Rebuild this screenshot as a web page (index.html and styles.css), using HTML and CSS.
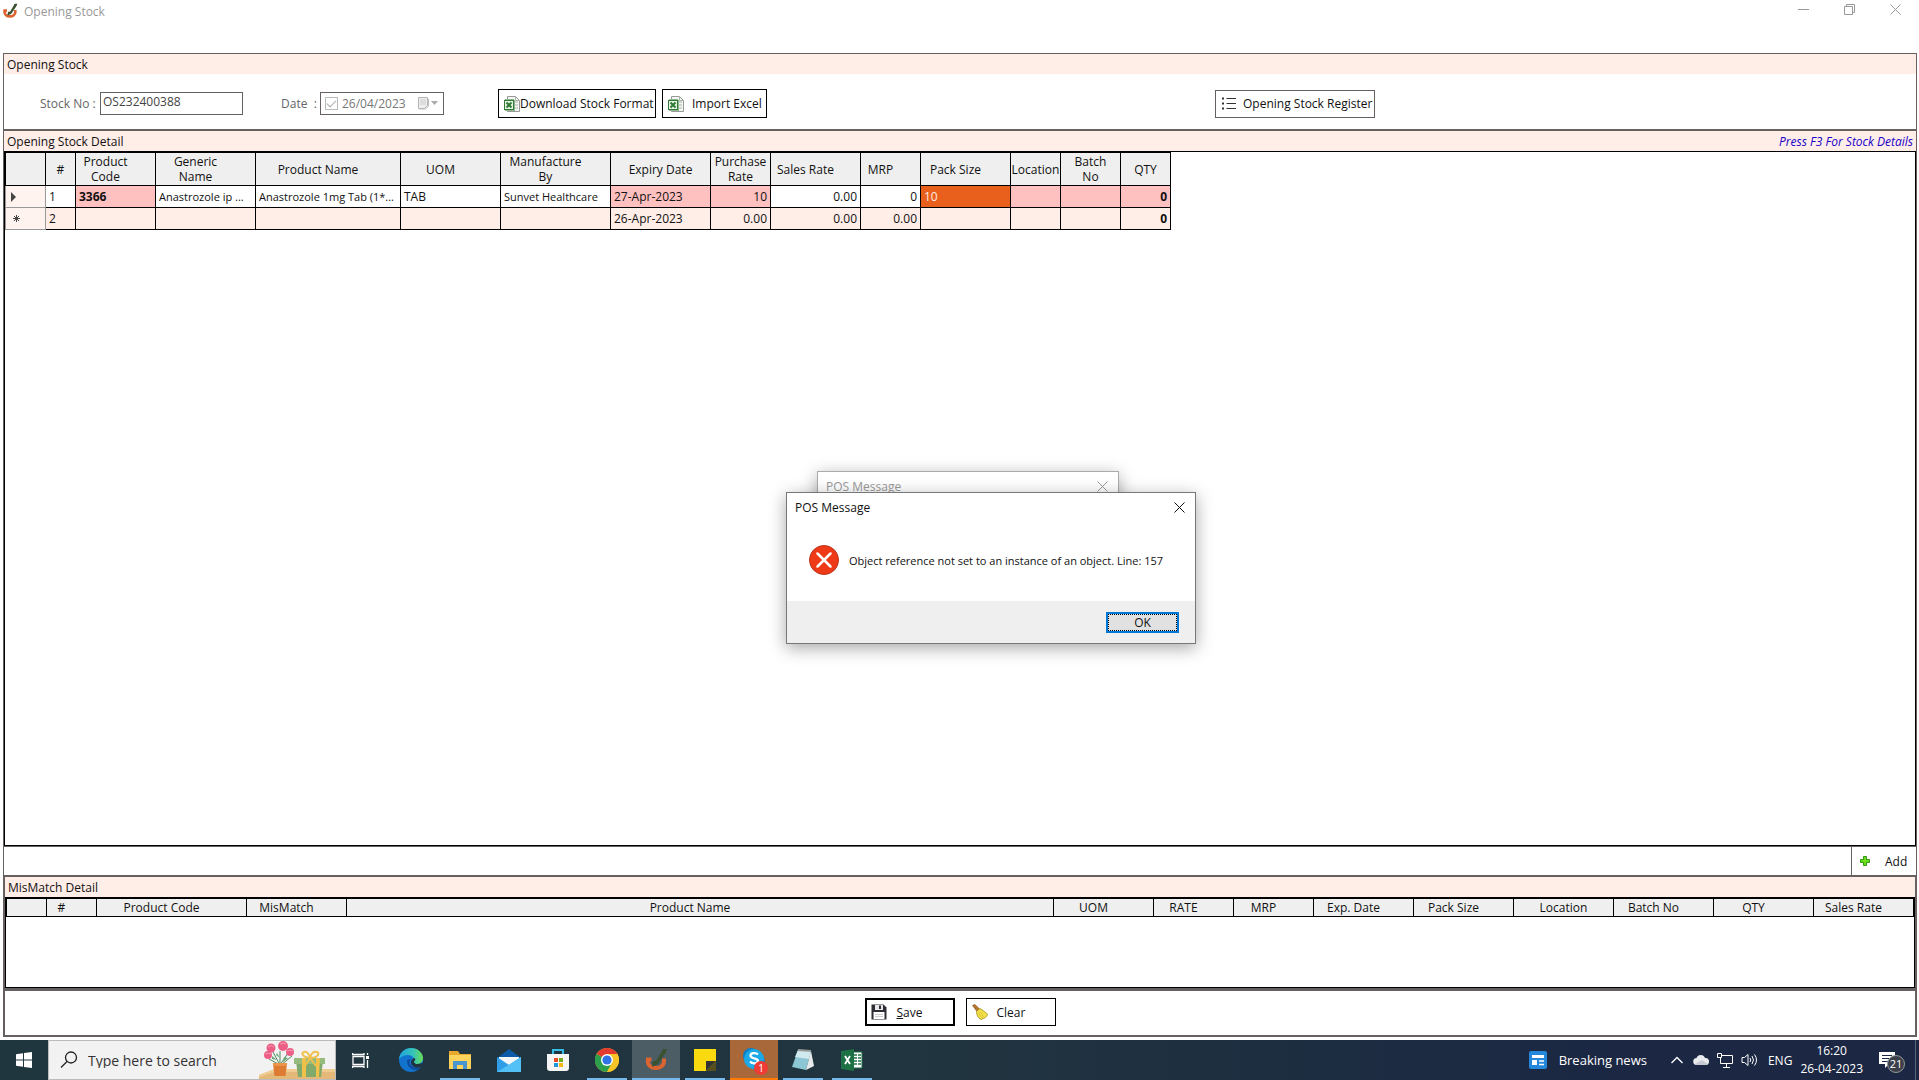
FILE: index.html
```html
<!DOCTYPE html>
<html lang="en">
<head>
    <meta charset="UTF-8">
    <meta name="viewport" content="width=device-width, initial-scale=1.0">
    <title>Opening Stock</title>
    <link rel="stylesheet" href="styles.css">
</head>
<body>

    <!-- shared icons -->
    <svg class="defs" width="0" height="0">
        <symbol id="logo" viewBox="0 0 24 24">
            <path d="M2 11.500h5.500M3.800 11.500v1.500c0 4.500 3.500 7 8 7s8.200-2.500 8.200-7v-2.500" fill="none" stroke="#dc6430" stroke-width="4"/>
            <path d="M18 3l1-2h4l-1 3-8 12-6 3 1-6h3z" fill="#3a5230"/>
        </symbol>
        <symbol id="excel" viewBox="0 0 16 16">
            <path d="M3.500.5h8l4 4v11h-12z" fill="#f4f6f4" stroke="#999"/>
            <path d="M11.500.5v4h4M9 6h5M9 9h5M9 12h5" fill="none" stroke="#aab5aa"/>
            <path d="M1 3h9v1h1v11H1z" fill="#8fb78f"/>
            <rect x=".5" y="4.500" width="9" height="9" fill="#e9f3e6" stroke="#2f7a34"/>
            <path d="M2.500 6.500l5 5M7.500 6.500l-5 5" stroke="#2f7a34" stroke-width="2"/>
        </symbol>
        <symbol id="close" viewBox="0 0 11 11">
            <path d="M.5.5l10 10M10.500.5l-10 10" fill="none" stroke="currentColor"/>
        </symbol>
    </svg>

    <header class="titlebar">
        <svg class="logo"><use href="#logo"/></svg>
        <h1>Opening Stock</h1>
        <div class="window-buttons">
            <button aria-label="Minimize"><svg width="11" height="11"><path d="M0 5.500h11" stroke="currentColor"/></svg></button>
            <button aria-label="Restore"><svg width="11" height="11" fill="none" stroke="currentColor"><path d="M.5 2.500h8v8h-8zM2.500 2.500v-2h8v8h-2"/></svg></button>
            <button aria-label="Close"><svg width="11" height="11"><use href="#close"/></svg></button>
        </div>
    </header>

    <main class="form">
        <section class="stock">
            <h2>Opening Stock</h2>
            <div class="fields">
                <label class="stock-label" for="stockNo">Stock No :</label>
                <input class="stock-no" id="stockNo" type="text" value="OS232400388" readonly>
                <label class="date-label" for="stockDate">Date &nbsp;:</label>
                <div class="date-box">
                    <input type="checkbox" id="useDate" aria-label="Use date" checked disabled>
                    <input type="text" id="stockDate" value="26/04/2023" disabled>
                    <button aria-label="Open calendar" disabled>
                        <svg width="20" height="13"><path d="M.5.5h9v8l-3 3h-6z" fill="#eee" stroke="#b5b5b5"/><path d="M2 3h6M2 5h6M2 7h6" stroke="#ccc"/><path d="M10.500 2v7l-3 3h-6" fill="none" stroke="#bbb"/><path d="M13 4h7l-3.500 4z" fill="#aaa"/></svg>
                    </button>
                </div>
                <button class="btn download"><svg class="icon"><use href="#excel"/></svg>Download Stock Format</button>
                <button class="btn import"><svg class="icon"><use href="#excel"/></svg>Import Excel</button>
                <button class="btn register">
                    <svg class="icon" viewBox="0 0 16 16"><path d="M5.500 2.500H15M5.500 7.500H15M5.500 12.500H15" stroke="#333"/><path d="M1 1.500h2v2H1zM1 6.500h2v2H1zM1 11.500h2v2H1z" fill="#333"/></svg>
                    Opening Stock Register
                </button>
            </div>
        </section>

        <section class="detail">
            <div class="section-head">
                <h2>Opening Stock Detail</h2>
                <em>Press F3 For Stock Details</em>
            </div>
            <div class="grid-box">
                <table class="grid stock-grid">
                    <colgroup>
                        <col class="w40"><col class="w30"><col class="w80"><col class="w100"><col class="w145">
                        <col class="w100"><col class="w110"><col class="w100"><col class="w60"><col class="w90">
                        <col class="w60"><col class="w90"><col class="w50"><col class="w60"><col class="w50">
                    </colgroup>
                    <thead>
                        <tr>
                            <th></th>
                            <th>#</th>
                            <th class="sort">Product<br>Code</th>
                            <th class="sort">Generic<br>Name</th>
                            <th class="sort">Product Name</th>
                            <th class="sort">UOM</th>
                            <th class="sort">Manufacture<br>By</th>
                            <th>Expiry Date</th>
                            <th>Purchase<br>Rate</th>
                            <th class="sort">Sales Rate</th>
                            <th class="sort">MRP</th>
                            <th class="sort">Pack Size</th>
                            <th>Location</th>
                            <th>Batch<br>No</th>
                            <th>QTY</th>
                        </tr>
                    </thead>
                    <tbody>
                        <tr>
                            <td class="row-head"><svg width="5" height="10"><path d="M0 0l5 5-5 5z" fill="#444"/></svg></td>
                            <td>1</td>
                            <td class="must bold">3366</td>
                            <td class="name">Anastrozole ip ...</td>
                            <td class="name">Anastrozole 1mg Tab (1*...</td>
                            <td>TAB</td>
                            <td class="name">Sunvet Healthcare</td>
                            <td class="must">27-Apr-2023</td>
                            <td class="must num">10</td>
                            <td class="num">0.00</td>
                            <td class="num">0</td>
                            <td class="selected">10</td>
                            <td class="must"></td>
                            <td class="must"></td>
                            <td class="must num bold">0</td>
                        </tr>
                        <tr class="new-row">
                            <td class="row-head"><svg class="star" width="7" height="7"><path d="M3.500 0v7M0 3.500h7M1 1l5 5M6 1L1 6" stroke="#444"/></svg></td>
                            <td>2</td>
                            <td></td>
                            <td></td>
                            <td></td>
                            <td></td>
                            <td></td>
                            <td>26-Apr-2023</td>
                            <td class="num">0.00</td>
                            <td class="num">0.00</td>
                            <td class="num">0.00</td>
                            <td></td>
                            <td></td>
                            <td></td>
                            <td class="num bold">0</td>
                        </tr>
                    </tbody>
                </table>
            </div>
            <div class="add-row">
                <button class="add">
                    <svg width="10" height="10"><path d="M3.500.5h3v3h3v3h-3v3h-3v-3h-3v-3h3z" fill="#6fdc1e" stroke="#2f9a10"/></svg>
                    Add
                </button>
            </div>
        </section>

        <section class="mismatch">
            <h2>MisMatch Detail</h2>
            <div class="mismatch-box">
                <table class="grid mismatch-grid">
                    <colgroup>
                        <col class="w40"><col class="w50"><col class="w150"><col class="w100"><col>
                        <col class="w100"><col class="w80"><col class="w80"><col class="w100"><col class="w100">
                        <col class="w100"><col class="w100"><col class="w100"><col class="w100">
                    </colgroup>
                    <thead>
                        <tr>
                            <th></th>
                            <th class="sort">#</th>
                            <th class="sort">Product Code</th>
                            <th class="sort">MisMatch</th>
                            <th class="sort">Product Name</th>
                            <th class="sort">UOM</th>
                            <th class="sort">RATE</th>
                            <th class="sort">MRP</th>
                            <th class="sort">Exp. Date</th>
                            <th class="sort">Pack Size</th>
                            <th>Location</th>
                            <th class="sort">Batch No</th>
                            <th class="sort">QTY</th>
                            <th class="sort">Sales Rate</th>
                        </tr>
                    </thead>
                </table>
            </div>
        </section>

        <div class="actions">
            <button class="btn action save">
                <svg class="icon" viewBox="0 0 16 16"><path d="M.5.5h12l3 3v12H.5z" fill="#2d2d35"/><path d="M4 1h8v5H4z" fill="#e8e8e8"/><path d="M8 1.500h2v3.500H8z" fill="#2d2d35"/><path d="M2.500 8h11v7h-11z" fill="#fff"/><path d="M4 10.500h8M4 12.500h8" stroke="#ccc"/></svg>
                <span><u>S</u>ave</span>
            </button>
            <button class="btn action">
                <svg class="icon" viewBox="0 0 16 16"><path d="M.5 1.500l2.500-1 5 5-2.500 2.500z" fill="#b8742a" stroke="#7b4a15" stroke-width=".6"/><path d="M8 4.500l3 2 4.500 3.500c0 1.500-1.500 3.500-3 4L9 15.500C6 14 4.500 11 4.500 7.500z" fill="#f2e04a" stroke="#a8901c" stroke-width=".8"/><path d="M8 8l4 5M6.500 9l3.500 5" stroke="#c9b02a" stroke-width=".6"/></svg>
                Clear
            </button>
        </div>
    </main>

    <div class="dialog dialog-back">
        <div class="dialog-title">POS Message <button aria-label="Close message"><svg width="11" height="11"><use href="#close"/></svg></button></div>
    </div>
    <div class="dialog dialog-front" role="alertdialog" aria-labelledby="msgTitle">
        <div class="dialog-title"><span id="msgTitle">POS Message</span> <button aria-label="Close dialog"><svg width="11" height="11"><use href="#close"/></svg></button></div>
        <div class="dialog-body">
            <svg width="30" height="30"><circle cx="15" cy="15" r="14.500" fill="#ee3a16" stroke="#b83418"/><path d="M8.500 8.500l13 13M21.500 8.500l-13 13" stroke="#fff" stroke-width="2.500" stroke-linecap="round"/></svg>
            <p>Object reference not set to an instance of an object. Line: 157</p>
        </div>
        <div class="dialog-foot"><button class="ok">OK</button></div>
    </div>

    <footer class="taskbar">
        <button class="task" aria-label="Start"><svg width="16" height="16" fill="#fff"><path d="M0 2.200L7 1.300V7.600H0zM8 1.100L16 0v7.600H8zM0 8.400h7v6.300l-7-1zM8 8.400h8V16l-8-1.100z"/></svg></button>
        <div class="search">
            <svg width="18" height="18" fill="none" stroke="#222" stroke-width="1.300"><circle cx="11" cy="6.500" r="5.500"/><path d="M7 10.500L1 16.500"/></svg>
            <input type="text" aria-label="Search" placeholder="Type here to search">
            <svg class="gift" width="76" height="38" viewBox="0 0 76 38">
                <path d="M0 38v-4l16-6h60v10z" fill="#e3b878"/>
                <path d="M0 36v-2l16-6h60v3H16z" fill="#f0cb8f"/>
                <path d="M21 24l-7-13M21 24l-11-6M21 24V10M21 24l8-12M22 24l11-9" stroke="#4e8a5c" fill="none"/>
                <path d="M13 15l5 4-5-1zM29 17l-5 4 1-5zM18 12l3 5-4-3z" fill="#6aa678"/>
                <g fill="#ec5e86"><circle cx="12" cy="7" r="4.500"/><circle cx="24" cy="5" r="5"/><circle cx="9" cy="14" r="4"/><circle cx="31" cy="11" r="4"/></g>
                <g fill="none" stroke="#f79ab0"><path d="M9 6q3-3 6 0M21 3q3-2 6 0M6 13q3-2 6 0M28 10q3-2 6 0"/></g>
                <path d="M14 22h14l-1.500 13h-11z" fill="#dd7b33"/><path d="M14 22h14v3H14z" fill="#ed9249"/>
                <path d="M37 20h27l-2 16H39z" fill="#7faa6c"/><path d="M35 17h31v6H35z" fill="#95bb7e"/>
                <path d="M43 17h4v19h-4zM57 17h4l-1 19h-3z" fill="#efc04a"/>
                <path d="M51 17c-8-1-9-5-6-6s5 2 6 6c1-5 4-7 7-6s1 6-7 6l6 8M51 17l-5 8" fill="none" stroke="#efc04a" stroke-width="2"/>
            </svg>
        </div>
        <button class="task" aria-label="Task view"><svg width="17" height="17" fill="none" stroke="#fff" stroke-width="1.300"><path d="M1 4.500h11v8H1zM.5 1v1.500h11.500V1M.5 16v-1.500h11.500V16M15.500 1v2M15.500 8v8"/><path d="M14 4h3v3h-3z" fill="#fff" stroke="none"/></svg></button>
        <nav class="apps">
            <button class="task" aria-label="Edge"><svg width="24" height="24">
                <defs>
                    <linearGradient id="edgeTop" x1="0" y1="0" x2="1" y2="0"><stop offset="0" stop-color="#1fa5e0"/><stop offset=".6" stop-color="#35c4b8"/><stop offset="1" stop-color="#6bdc55"/></linearGradient>
                </defs>
                <circle cx="12" cy="12" r="12" fill="#1273cf"/>
                <path d="M0 11C1 4 6 0 12 0c7 0 12 5 12 10 0 4-3 6-6 6-2 0-4-1-3-3 1-3-2-6-6-6-4 0-7 2-9 4z" fill="url(#edgeTop)"/>
                <path d="M8 13c0 6 5 9 9 9 2 0 4-1 5-3-2 1-9 2-11-3-1-2 0-4 1-5-2 0-4 1-4 2z" fill="#0d4c9b"/>
                <path d="M15 10c3 1 0 3 0 4 0 2 4 3 8 1l1 1-2 3c-2 1-5 1-7 0-4-2-4-7 0-9z" fill="#20343f"/>
            </svg></button>
            <button class="task running" aria-label="File Explorer"><svg width="22" height="18"><path d="M0 0h9l2 3h11v15H0z" fill="#e8a92f"/><path d="M0 4h22v14H0z" fill="#fcd35d"/><path d="M4 10h14v8h-4v-4H8v4H4z" fill="#4a96cf"/></svg></button>
            <button class="task" aria-label="Mail"><svg width="24" height="23"><path d="M0 9L12 0l12 9v4H0z" fill="#0c5ba8"/><path d="M2 8h20v8H2z" fill="#f5f8fb"/><path d="M0 8l12 8L24 8v15H0z" fill="#2f9ee6"/><path d="M0 23L24 8v15z" fill="#53c1f5"/></svg></button>
            <button class="task" aria-label="Store"><svg width="22" height="24"><path d="M6 6V2h10v4" fill="none" stroke="#36bde5" stroke-width="2"/><path d="M0 6h22v14q0 3-3 3H3q-3 0-3-3z" fill="#f5f5f5"/><path d="M7 10h4v4H7z" fill="#e74a28"/><path d="M12 10h4v4h-4z" fill="#72ad1f"/><path d="M7 15h4v4H7z" fill="#2197db"/><path d="M12 15h4v4h-4z" fill="#f6b516"/></svg></button>
            <button class="task running" aria-label="Chrome"><svg width="24" height="24"><circle cx="12" cy="12" r="12" fill="#f9c526"/><path d="M12 12L1.600 6A12 12 0 0 1 22.400 6z" fill="#e33b2e"/><path d="M12 12L1.600 6A12 12 0 0 0 12 24l5.200-9z" fill="#2b9f4b"/><path d="M12 6h10.400A12 12 0 0 1 12 24l5-9z" fill="#f9c526"/><circle cx="12" cy="12" r="6" fill="#fff"/><circle cx="12" cy="12" r="4.600" fill="#2f73e4"/></svg></button>
            <button class="task running active" aria-label="Opening Stock"><svg width="24" height="24"><use href="#logo"/></svg></button>
            <button class="task running" aria-label="Sticky Notes"><svg width="22" height="22"><path d="M0 0h22v12L12 22H0z" fill="#fbd90f"/><path d="M12 22V12h10z" fill="#333"/><path d="M22 12v10H12z" fill="#57501e"/></svg></button>
            <button class="task alert" aria-label="Skype">
                <svg width="24" height="24"><circle cx="9" cy="9" r="8" fill="#0a7fc9"/><circle cx="15" cy="15" r="8" fill="#0a7fc9"/><circle cx="12" cy="12" r="10" fill="#1ba9e8"/><path d="M16 7.500c-2-2-7.500-2-7.500 1.200 0 3.300 7.500 2 7.500 5.300 0 3-6 3-8 .5" fill="none" stroke="#fff" stroke-width="2.300"/></svg>
                <span class="badge">1</span>
            </button>
            <button class="task running" aria-label="Notepad"><svg width="24" height="22"><path d="M7 1l13 1-5 19-14-3z" fill="#8cc5d3"/><path d="M7 1l13 1-2 8L4 8z" fill="#cfe9ef"/><path d="M20 2l3 15-8 4z" fill="#e7eaea"/><path d="M7 1l13 1" stroke="#999" stroke-width="2"/></svg></button>
            <button class="task running" aria-label="Excel"><svg width="22" height="22"><path d="M11 3h10v16H11z" fill="#fff" stroke="#1e7145"/><path d="M13 6h3M13 9h3M13 12h3M13 15h3M17 6h3M17 9h3M17 12h3M17 15h3" stroke="#1e7145" stroke-width="1.500"/><path d="M0 2l13-2v22L0 20z" fill="#1e7145"/><path d="M4 7l5 8M9 7l-5 8" stroke="#fff" stroke-width="1.800"/></svg></button>
        </nav>
        <div class="tray">
            <button class="news"><svg width="18" height="18"><rect width="18" height="18" rx="2" fill="#2487dc"/><path d="M3 4h12v3H3z" fill="#fff"/><path d="M3 9h5v5H3z" fill="#fff"/><path d="M10 10h5M10 13.500h5" stroke="#fff" stroke-width="1.500"/></svg>Breaking news</button>
            <svg width="12" height="16" fill="none" stroke="#fff" stroke-width="1.300"><path d="M.5 11L6 5.500l5.500 5.500"/></svg>
            <svg class="cloud" width="16" height="16"><path d="M4 13a3.500 3.500 0 0 1-.5-7A4.500 4.500 0 0 1 12 6a3.500 3.500 0 0 1 1 7z" fill="#e9ebee"/><path d="M2 12l7-4 6 4q-1 1-2 1H4q-1.500 0-2-1z" fill="#c6cbd1"/></svg>
            <svg width="16" height="16" fill="none" stroke="#fff"><path d="M5 3.500h10.500v8H3.500V6M9.500 12v3M6 15.500h7M.5 1.500h4v4h-4z"/></svg>
            <svg width="17" height="16" fill="none" stroke="#fff"><path d="M1 5.500h2.500L7 2.500v11l-3.500-3H1zM9 6q1.500 2 0 4M11 4q3 4 0 8M13.500 2.500q4 5.500 0 11"/></svg>
            <span class="lang">ENG</span>
            <time>16:20<br>26-04-2023</time>
            <button class="notify" aria-label="Notifications">
                <svg width="16" height="18"><path d="M0 1h16v12h-6l-4 4v-4H0z" fill="#fff"/><path d="M3 4.500h10M3 7.500h10M3 10.500h6" stroke="#1b2743"/></svg>
                <span class="count">21</span>
            </button>
        </div>
    </footer>

</body>
</html>
```

FILE: styles.css
```css
* {
    margin: 0;
    padding: 0;
    box-sizing: border-box;
}
body {
    display: flex;
    flex-direction: column;
    min-height: 100vh;
    font-family: "Open Sans", "Noto Sans", sans-serif;
    font-size: 12px;
    line-height: 15px;
    color: #111;
    background-color: #fff;
}
button, input {
    font: inherit;
    color: inherit;
    border: none;
    background: none;
}
svg {
    display: block;
    flex: none;
}
.defs {
    position: absolute;
}
h1, h2 {
    font-size: 12px;
    font-weight: normal;
}

/* title bar */
.titlebar {
    display: flex;
    align-items: flex-start;
    height: 53px;
    padding: 3px 1px 0 2px;
    color: #999;
}
.titlebar h1 {
    margin: 1px 0 0 6px;
}
.logo {
    width: 16px;
    height: 16px;
}
.window-buttons {
    display: flex;
    margin-left: auto;
}
.window-buttons button {
    display: flex;
    justify-content: center;
    width: 46px;
    padding-top: 1px;
}

/* form panels */
.form {
    flex: 1;
    display: flex;
    flex-direction: column;
    margin: 0 2px 3px 3px;
    border: 1px solid #666060;
}
h2, .section-head {
    height: 20px;
    padding: 3px 3px 2px;
    background-color: #ffede8;
}
.section-head {
    display: flex;
    justify-content: space-between;
}
.section-head h2 {
    padding: 0;
    height: 15px;
}
.section-head em {
    color: #1a00c8;
}
.stock {
    border-bottom: 2px solid #666060;
}
.fields {
    display: flex;
    align-items: center;
    height: 55px;
    padding-left: 36px;
    padding-top: 4px;
    color: #666;
}
.stock-label {
    width: 60px;
}
.stock-no {
    width: 143px;
    height: 23px;
    padding: 0 2px 4px;
    border: 1px solid #666060;
    color: #444;
}
.date-label {
    width: 39px;
    margin-left: 38px;
}
.date-box {
    display: flex;
    align-items: center;
    width: 124px;
    height: 23px;
    padding: 0 5px 0 4px;
    border: 1px solid #666060;
    color: #777;
}
.date-box input[type="checkbox"] {
    appearance: none;
    flex: none;
    width: 13px;
    height: 13px;
    margin-right: 4px;
    border: 1px solid #bbb;
}
.date-box input[type="checkbox"]:checked::after {
    content: "";
    display: block;
    width: 8px;
    height: 4px;
    margin: 2px 0 0 1px;
    border: solid #aaa;
    border-width: 0 0 1px 1px;
    transform: rotate(-45deg);
}
.date-box input[type="text"] {
    flex: 1;
    min-width: 0;
}
.btn {
    display: flex;
    align-items: center;
    height: 29px;
    padding: 0 5px;
    border: 1px solid #000;
    background-color: #fff;
    color: #111;
    white-space: nowrap;
}
.icon {
    width: 16px;
    height: 16px;
}
.download {
    width: 158px;
    margin-left: 54px;
}
.import {
    width: 105px;
    margin-left: 6px;
    gap: 8px;
}
.register {
    width: 160px;
    height: 28px;
    margin-left: 448px;
    gap: 6px;
    border-color: #666060;
}

/* grids */
.detail {
    flex: 1;
    display: flex;
    flex-direction: column;
}
.grid-box {
    flex: 1;
    border: 1px solid #000;
}
.grid {
    border-collapse: collapse;
    table-layout: fixed;
}
.stock-grid {
    width: 1166px;
}
.mismatch-grid {
    width: 100%;
}
.w30 { width: 30px; }
.w40 { width: 40px; }
.w50 { width: 50px; }
.w60 { width: 60px; }
.w80 { width: 80px; }
.w90 { width: 90px; }
.w100 { width: 100px; }
.w110 { width: 110px; }
.w145 { width: 145px; }
.w150 { width: 150px; }
.grid th, .grid td {
    border: 1px solid #000;
    white-space: nowrap;
}
.grid th {
    height: 33px;
    font-weight: normal;
    background-color: #efefef;
}
.grid th.sort {
    padding-right: 20px;
}
.mismatch-grid th {
    height: 18px;
}
.grid td {
    height: 22px;
    padding: 0 3px;
    overflow: hidden;
}
.grid td.name {
    font-size: 11px;
}
.grid td.num {
    text-align: right;
}
.grid td.bold {
    font-weight: bold;
}
.grid td.must {
    background-color: #ffc0c0;
}
.grid td.selected {
    background-color: #e9601c;
    color: #ffede8;
}
.new-row td {
    background-color: #ffede8;
}
.grid td.row-head {
    padding-left: 5px;
    border-color: #999;
    background-color: #fff3f0;
}
.star {
    margin-left: 2px;
}
.add-row {
    display: flex;
    justify-content: flex-end;
    height: 31px;
    border: solid #666060;
    border-width: 1px 0 2px;
}
.add {
    display: flex;
    align-items: center;
    gap: 15px;
    width: 65px;
    padding-left: 8px;
    border-left: 1px solid #666060;
}
.mismatch {
    border: solid #666060;
    border-width: 0 1px 3px;
}
.mismatch-box {
    height: 91px;
    border: 1px solid #000;
}
.actions {
    display: flex;
    justify-content: center;
    align-items: center;
    gap: 11px;
    height: 45px;
    padding-bottom: 2px;
    border: solid #666060;
    border-width: 0 1px 1px;
}
.action {
    width: 90px;
    height: 28px;
    gap: 9px;
}
.save {
    border-width: 2px;
    padding: 0 4px;
    gap: 10px;
}

/* message boxes */
.dialog {
    position: absolute;
    border: 1px solid #777;
    background-color: #fff;
    box-shadow: 0 4px 16px rgba(0, 0, 0, 0.35);
}
.dialog-back {
    left: 817px;
    top: 471px;
    width: 302px;
    height: 100px;
    color: #999;
    border-color: #aaa;
}
.dialog-front {
    left: 786px;
    top: 492px;
    width: 410px;
}
.dialog-title {
    display: flex;
    justify-content: space-between;
    align-items: center;
    height: 28px;
    padding: 0 10px 0 8px;
}
.dialog-body {
    display: flex;
    align-items: center;
    gap: 10px;
    height: 80px;
    padding-left: 22px;
    padding-bottom: 2px;
    font-size: 11px;
}
.dialog-foot {
    display: flex;
    justify-content: flex-end;
    align-items: center;
    height: 42px;
    padding-right: 16px;
    background-color: #efefef;
}
.ok {
    width: 73px;
    height: 21px;
    border: 2px solid #0078d7;
    outline: 1px dotted #000;
    outline-offset: -3px;
    background-color: #e1e1e1;
}

/* taskbar */
.taskbar {
    display: flex;
    height: 40px;
    color: #fff;
    background: linear-gradient(90deg, #20363f, #20343f 50%, #1b2743 85%);
}
.task {
    position: relative;
    display: flex;
    justify-content: center;
    align-items: center;
    width: 48px;
    height: 40px;
}
.search {
    display: flex;
    align-items: center;
    width: 288px;
    padding-left: 11px;
    border: 1px solid #bbb;
    background-color: #f2f2f2;
}
.search input {
    flex: 1;
    min-width: 0;
    margin-left: 10px;
    font-size: 14px;
}
.search input::placeholder {
    color: #333;
    opacity: 1;
}
.apps {
    display: flex;
    gap: 1px;
    margin-left: 3px;
}
.running::after {
    content: "";
    position: absolute;
    left: 4px;
    right: 4px;
    bottom: 0;
    height: 2px;
    background-color: #76b9ed;
}
.active {
    background-color: #4d5d66;
}
.active::after {
    left: 0;
    right: 0;
}
.alert {
    background-color: #a9683a;
    border-bottom: 2px solid #ff7b00;
}
.badge {
    position: absolute;
    right: 10px;
    bottom: 3px;
    width: 14px;
    height: 14px;
    border-radius: 50%;
    background-color: #ee3b35;
    font-size: 10px;
    line-height: 14px;
}
.tray {
    display: flex;
    align-items: center;
    gap: 8px;
    margin-left: auto;
    margin-right: 3px;
    padding-right: 10px;
    border-right: 1px solid #5a6478;
}
.news {
    display: flex;
    align-items: center;
    gap: 12px;
    margin-right: 16px;
    font-size: 13px;
}
.cloud {
    margin-left: 2px;
}
.lang {
    margin-left: 2px;
}
.tray time {
    line-height: 18px;
    text-align: center;
}
.notify {
    position: relative;
    width: 26px;
    height: 26px;
    margin-left: 8px;
}
.count {
    position: absolute;
    right: 0;
    bottom: 0;
    width: 18px;
    height: 18px;
    border: 1px solid #999;
    border-radius: 50%;
    background-color: #3a3f4a;
    font-size: 11px;
    line-height: 16px;
}
```
